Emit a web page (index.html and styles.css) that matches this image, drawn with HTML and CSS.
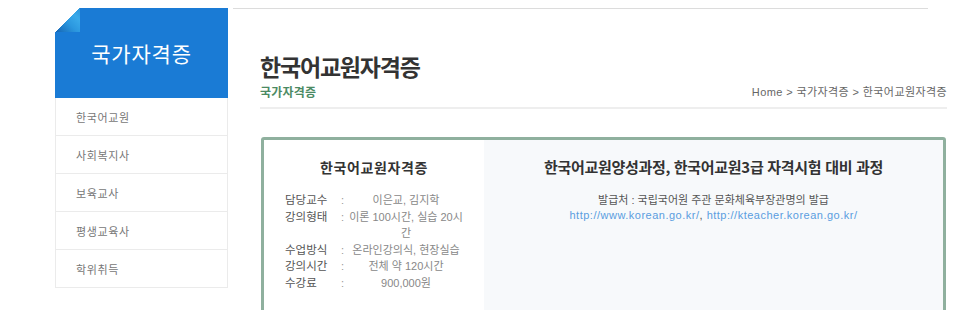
FILE: index.html
```html
<!DOCTYPE html>
<html lang="ko">
<head>
<meta charset="utf-8">
<title>한국어교원자격증</title>
<link rel="stylesheet" href="styles.css">
</head>
<body>
<div class="page">
  <aside class="side">
    <div class="side-head"><span class="fold"></span>국가자격증</div>
    <ul class="side-menu">
      <li>한국어교원</li>
      <li>사회복지사</li>
      <li>보육교사</li>
      <li>평생교육사</li>
      <li>학위취득</li>
    </ul>
  </aside>
  <main class="main">
    <div class="topline"></div>
    <div class="inner">
      <div class="head">
        <div class="head-left">
          <h1 class="title">한국어교원자격증</h1>
          <div class="sub">국가자격증</div>
        </div>
        <div class="crumb">Home &gt; 국가자격증 &gt; 한국어교원자격증</div>
      </div>
      <div class="card">
        <div class="card-left">
          <h2 class="card-title">한국어교원자격증</h2>
          <div class="info">
            <span class="lbl">담당교수</span><span class="col">:</span><span class="val">이은교, 김지학</span>
            <span class="lbl">강의형태</span><span class="col">:</span><span class="val">이론 100시간, 실습 20시간</span>
            <span class="lbl">수업방식</span><span class="col">:</span><span class="val">온라인강의식, 현장실습</span>
            <span class="lbl">강의시간</span><span class="col">:</span><span class="val">전체 약 120시간</span>
            <span class="lbl">수강료</span><span class="col">:</span><span class="val">900,000원</span>
          </div>
        </div>
        <div class="card-right">
          <h2 class="r-title">한국어교원양성과정, 한국어교원3급 자격시험 대비 과정</h2>
          <p class="issuer">발급처 : 국립국어원 주관 문화체육부장관명의 발급</p>
          <p class="links"><a href="#">http://www.korean.go.kr/</a>, <a href="#">http://kteacher.korean.go.kr/</a></p>
        </div>
      </div>
    </div>
  </main>
</div>
</body>
</html>
```
FILE: styles.css
```css
* { box-sizing: border-box; }
body {
  margin: 0;
  background: #fff;
  font-family: "Liberation Sans", "Noto Sans CJK KR", sans-serif;
  color: #333;
}
.page {
  display: flex;
  align-items: flex-start;
  padding: 8px 0 0 55px;
  width: 966px;
}
.side { width: 173px; flex: none; }
.side-head {
  position: relative;
  height: 90px;
  background: #1a7bd5;
  color: #fff;
  font-family: "Noto Sans CJK KR", sans-serif;
  font-size: 21px;
  letter-spacing: 0.8px;
  display: flex;
  align-items: center;
  justify-content: center;
}
.fold {
  position: absolute;
  left: 0;
  top: 0;
  width: 25px;
  height: 24px;
  background:
    linear-gradient(135deg, #fff 50%, transparent 50%),
    linear-gradient(45deg, #1463b2 0%, #2b97df 45%, #3aaaea 75%, #2b94dc 100%);
}
.side-menu {
  list-style: none;
  margin: 0;
  padding: 0;
  border: 1px solid #ebebeb;
  border-top: 0;
}
.side-menu li {
  height: 38px;
  border-bottom: 1px solid #ebebeb;
  padding-left: 20px;
  display: flex;
  align-items: center;
  font-family: "Noto Sans CJK KR", sans-serif;
  font-size: 11px;
  letter-spacing: 0.6px;
  color: #777;
}
.side-menu li:last-child { border-bottom: 0; height: 37px; }
.main { margin-left: 5px; width: 714px; }
.topline { width: 695px; height: 1px; background: #dcdcdc; }
.inner { margin-left: 27px; }
.head {
  display: flex;
  justify-content: space-between;
  align-items: flex-end;
  padding-top: 42px;
  padding-bottom: 7px;
  border-bottom: 2px solid #eee;
}
.title {
  margin: 0;
  font-family: "Noto Sans CJK KR", sans-serif;
  font-size: 23px;
  line-height: 30px;
  font-weight: bold;
  letter-spacing: -1.2px;
  color: #333;
}
.sub {
  margin-top: 3px;
  font-family: "Noto Sans CJK KR", sans-serif;
  font-size: 12px;
  line-height: 16px;
  font-weight: bold;
  letter-spacing: 0.2px;
  color: #4b8a63;
}
.crumb {
  font-size: 11px;
  line-height: 16px;
  letter-spacing: 0.4px;
  color: #666;
}
.card {
  margin: 28px 1px 0 1px;
  border: 3px solid #8fb09e;
  border-radius: 3px;
  display: flex;
}
.card-left {
  width: 220px;
  flex: none;
  background: #fff;
  padding: 17px 0 20px;
}
.card-title {
  margin: 0;
  text-align: center;
  font-family: "Noto Sans CJK KR", sans-serif;
  font-size: 14px;
  line-height: 20px;
  font-weight: bold;
  letter-spacing: 0.6px;
  color: #333;
}
.info {
  margin: 15px 0 0 21px;
  display: grid;
  grid-template-columns: 56px 6px 118px;
  font-size: 11px;
  line-height: 16.5px;
}
.lbl { color: #555; font-size: 11.5px; }
.col { color: #999; }
.val { color: #888; text-align: center; }
.card-right {
  flex: 1;
  background: #f7f9fb;
  text-align: center;
  padding-top: 17px;
}
.r-title {
  margin: 0;
  font-family: "Noto Sans CJK KR", sans-serif;
  font-size: 15px;
  line-height: 20px;
  font-weight: bold;
  letter-spacing: -0.3px;
  color: #333;
}
.issuer {
  margin: 15px 0 0;
  font-size: 11px;
  line-height: 16px;
  color: #555;
}
.links {
  margin: 0;
  font-size: 11px;
  line-height: 15px;
  letter-spacing: 0.5px;
  color: #555;
}
.links a { color: #5a9de0; text-decoration: none; }
```
